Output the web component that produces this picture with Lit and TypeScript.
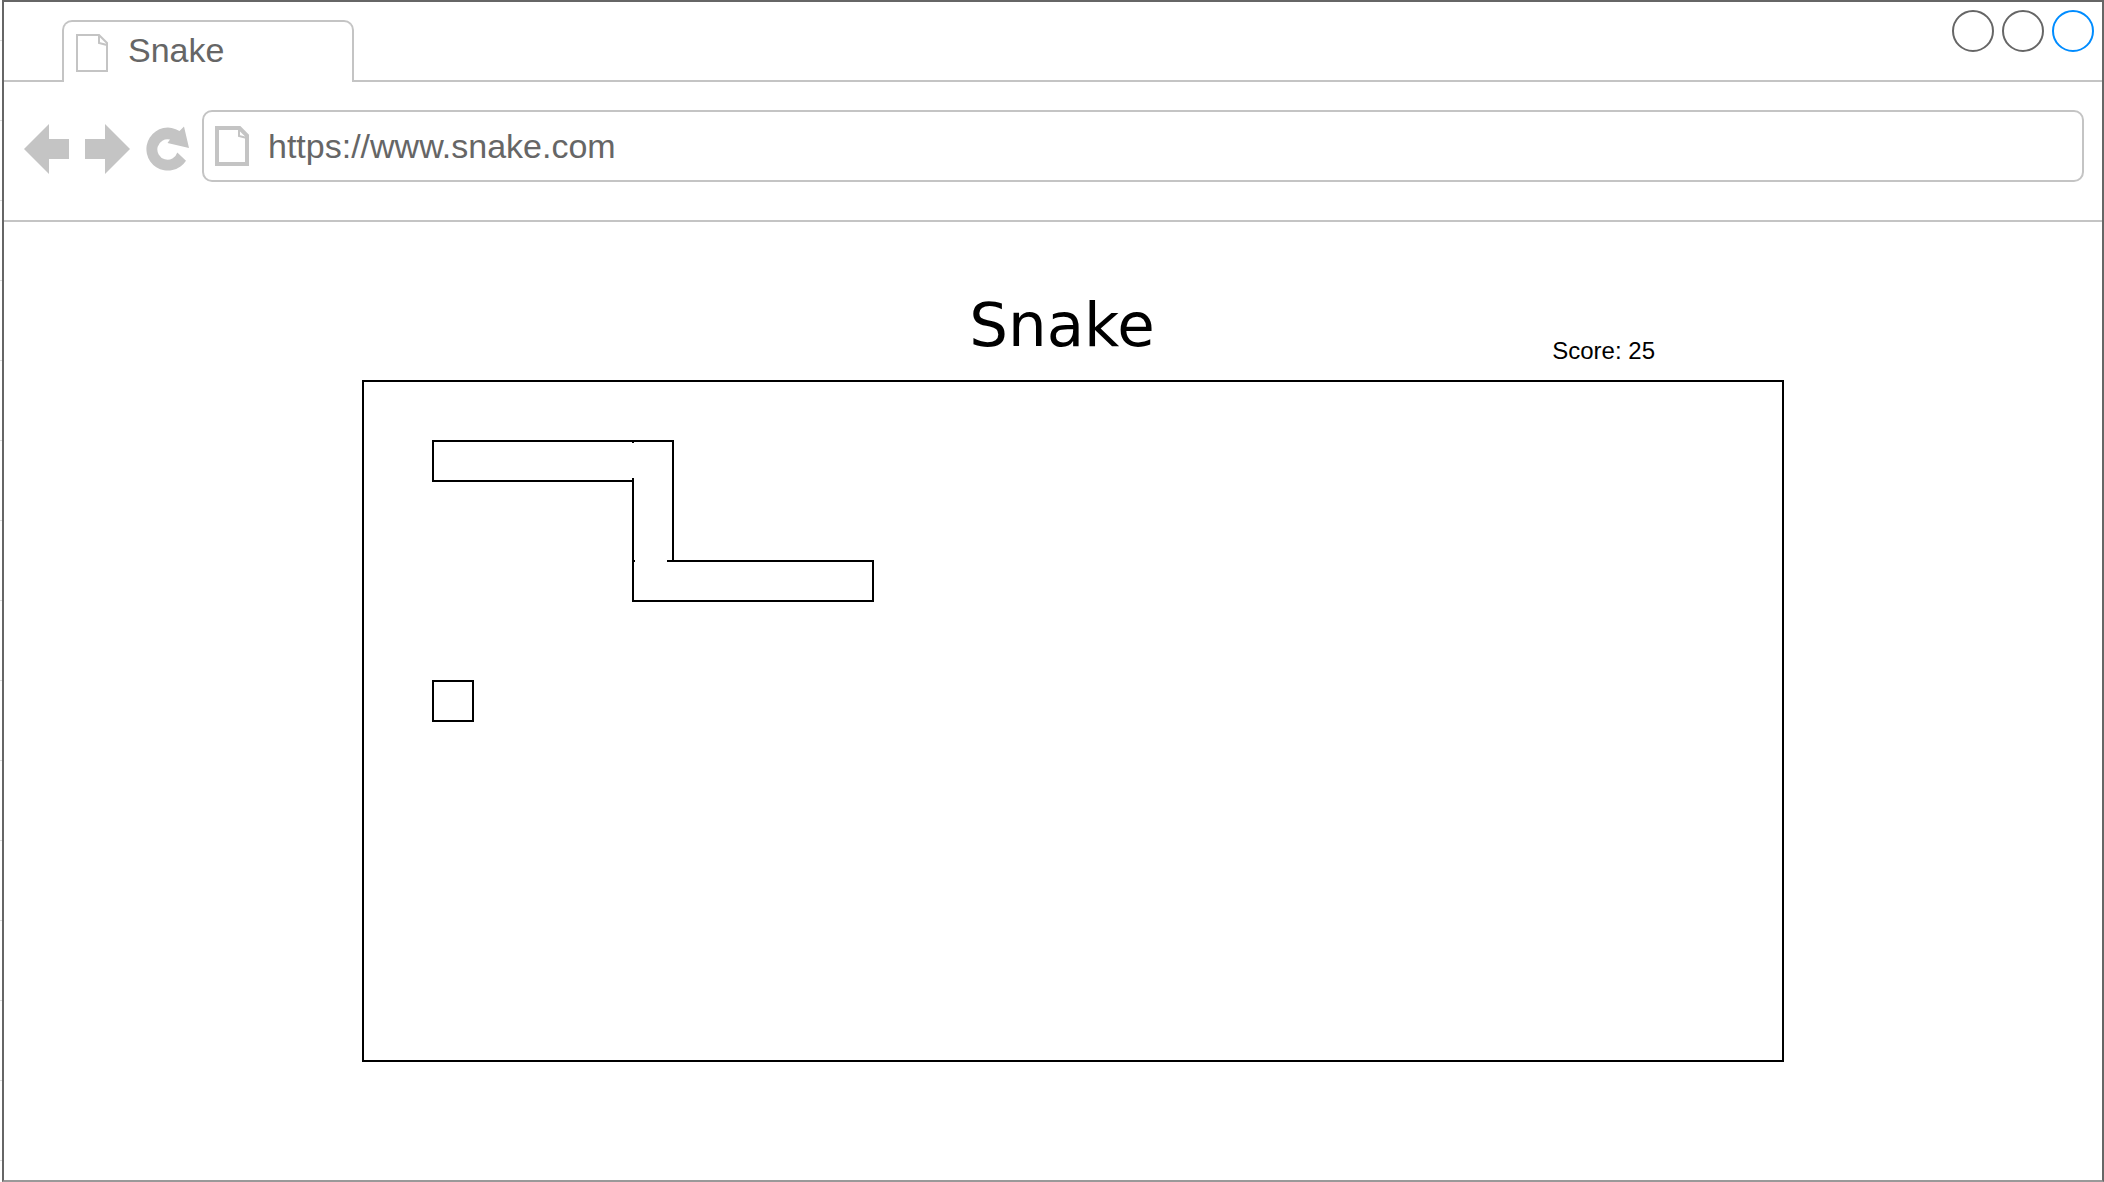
import { LitElement, html, css, svg } from "lit";
import { customElement, property, state } from "lit/decorators.js";

@customElement("window-chrome")
class WindowChrome extends LitElement {
  @property() label = "";
  @property() address = "";

  static styles = css`
    :host {
      display: block;
      color: #666;
      font-family: "Liberation Sans", Arial, Helvetica, sans-serif;
      font-size: 34px;
    }
    * {
      box-sizing: border-box;
    }
    svg {
      display: block;
      flex: none;
    }
    button,
    input {
      margin: 0;
      padding: 0;
      border: 0;
      background: none;
      color: inherit;
      font: inherit;
    }
    .strip {
      display: flex;
      height: 80px;
    }
    .lead {
      flex: none;
      width: 58px;
      border-bottom: 2px solid #c4c4c4;
    }
    .tab {
      display: flex;
      align-items: flex-start;
      gap: 20px;
      flex: none;
      width: 292px;
      margin-top: 18px;
      padding-left: 12px;
      border: 2px solid #c4c4c4;
      border-bottom: 0;
      border-radius: 10px 10px 0 0;
      line-height: 56px;
    }
    .tab svg {
      margin-top: 12px;
    }
    .controls {
      display: flex;
      flex: 1;
      justify-content: flex-end;
      gap: 8px;
      padding: 8px 8px 0 0;
      border-bottom: 2px solid #c4c4c4;
    }
    .dot {
      width: 42px;
      height: 42px;
      border: 2px solid #666;
      border-radius: 50%;
    }
    .dot.active {
      border-color: #008cff;
    }
    .toolbar {
      display: flex;
      align-items: center;
      gap: 12px;
      padding: 28px 18px 38px 20px;
      border-bottom: 2px solid #c4c4c4;
    }
    .nav {
      display: flex;
      gap: 16px;
      padding-top: 6px;
    }
    .address {
      display: flex;
      align-items: center;
      gap: 19px;
      flex: 1;
      min-width: 0;
      height: 72px;
      padding: 0 11px;
      border: 2px solid #c4c4c4;
      border-radius: 10px;
    }
    .address input {
      flex: 1;
      min-width: 0;
      height: 60px;
      outline: none;
    }
  `;

  render() {
    return html`
      <div class="strip">
        <div class="lead"></div>
        <button class="tab" type="button">
          <svg width="32" height="38" fill="none" stroke="#c4c4c4" stroke-width="2" aria-hidden="true">
            <path d="M1 1H23L31 9V37H1Z" />
            <path d="M23 1V9L31 11" />
          </svg>
          <span>${this.label}</span>
        </button>
        <div class="controls">
          <button class="dot" type="button" aria-label="Minimize"></button>
          <button class="dot" type="button" aria-label="Maximize"></button>
          <button class="dot active" type="button" aria-label="Close"></button>
        </div>
      </div>
      <div class="toolbar">
        <div class="nav">
          <button type="button" aria-label="Back">
            <svg width="45" height="50" fill="#c4c4c4">
              <path d="M0 25L25 0V15H45V35H25V50Z" />
            </svg>
          </button>
          <button type="button" aria-label="Forward">
            <svg width="45" height="50" fill="#c4c4c4">
              <path d="M45 25L20 0V15H0V35H20V50Z" />
            </svg>
          </button>
          <button type="button" aria-label="Reload">
            <svg width="44" height="50" fill="#c4c4c4">
              <path
                d="M33.5 7L38 2.5L43 24L21.5 19L24 15.6A10.2 10.2 0 1 0 31.3 28.5L40 36.7A21.5 21.5 0 1 1 33.5 7Z"
              />
            </svg>
          </button>
        </div>
        <label class="address">
          <svg width="34" height="40" fill="none" stroke="#c4c4c4" aria-hidden="true">
            <path stroke-width="4" d="M2 2H24.5L32 9.5V38H2Z" />
            <path stroke-width="2" d="M24 2V10L32 12" />
          </svg>
          <input type="text" aria-label="Address" spellcheck="false" .value=${this.address} />
        </label>
      </div>
    `;
  }
}

@customElement("snake-game")
class SnakeGame extends LitElement {
  @state() score = 25;

  static styles = css`
    :host {
      display: grid;
      grid-template-columns: 358fr 1422fr 318fr;
      color: #000;
    }
    .game {
      display: flex;
      flex-direction: column;
      grid-column: 2;
      padding-bottom: 118px;
    }
    .head {
      display: grid;
      grid-template-columns: 1fr auto 1fr;
      padding: 64px 22px 16px 0;
    }
    .title {
      grid-column: 2;
      margin: 0;
      font: 400 61px/78px "DejaVu Sans", Verdana, sans-serif;
    }
    .score {
      align-self: end;
      justify-self: end;
      margin: 0;
      padding-right: 107px;
      font: 24px/26px "Liberation Sans", Arial, Helvetica, sans-serif;
    }
    .board {
      flex: 1;
      padding: 58px 68px;
      border: 2px solid #000;
    }
    .board svg {
      display: block;
    }
  `;

  render() {
    const snake = svg`
      <path d="M201 3V1H1V41H201" />
      <path d="M200 1H241V121" />
      <path d="M201 38V161H441V121H235" />
      <path d="M201 121H203" />
    `;
    return html`
      <main class="game">
        <header class="head">
          <h1 class="title">Snake</h1>
          <p class="score">Score: ${this.score}</p>
        </header>
        <section class="board">
          <svg
            width="444"
            height="284"
            fill="none"
            stroke="#000"
            stroke-width="2"
            shape-rendering="crispEdges"
            role="img"
            aria-label="Snake and food"
          >
            ${snake}
            <rect x="1" y="241" width="40" height="40" />
          </svg>
        </section>
      </main>
    `;
  }
}

@customElement("app-root")
class AppRoot extends LitElement {
  static styles = css`
    :host {
      display: block;
      box-sizing: border-box;
      min-height: 100vh;
      padding-left: 2px;
      background: linear-gradient(#fff 40px, #ddd 40px, #ddd 41px, #fff 41px) 0 0 / 2px 80px repeat-y #fff;
    }
    .window {
      display: flex;
      flex-direction: column;
      box-sizing: border-box;
      min-height: 100vh;
      border: 2px solid #666;
      border-bottom-color: #999;
      background: #fff;
    }
    .page {
      flex: 1;
    }
  `;

  render() {
    return html`
      <div class="window">
        <window-chrome label="Snake" address="https://www.snake.com"></window-chrome>
        <snake-game class="page"></snake-game>
      </div>
    `;
  }
}
